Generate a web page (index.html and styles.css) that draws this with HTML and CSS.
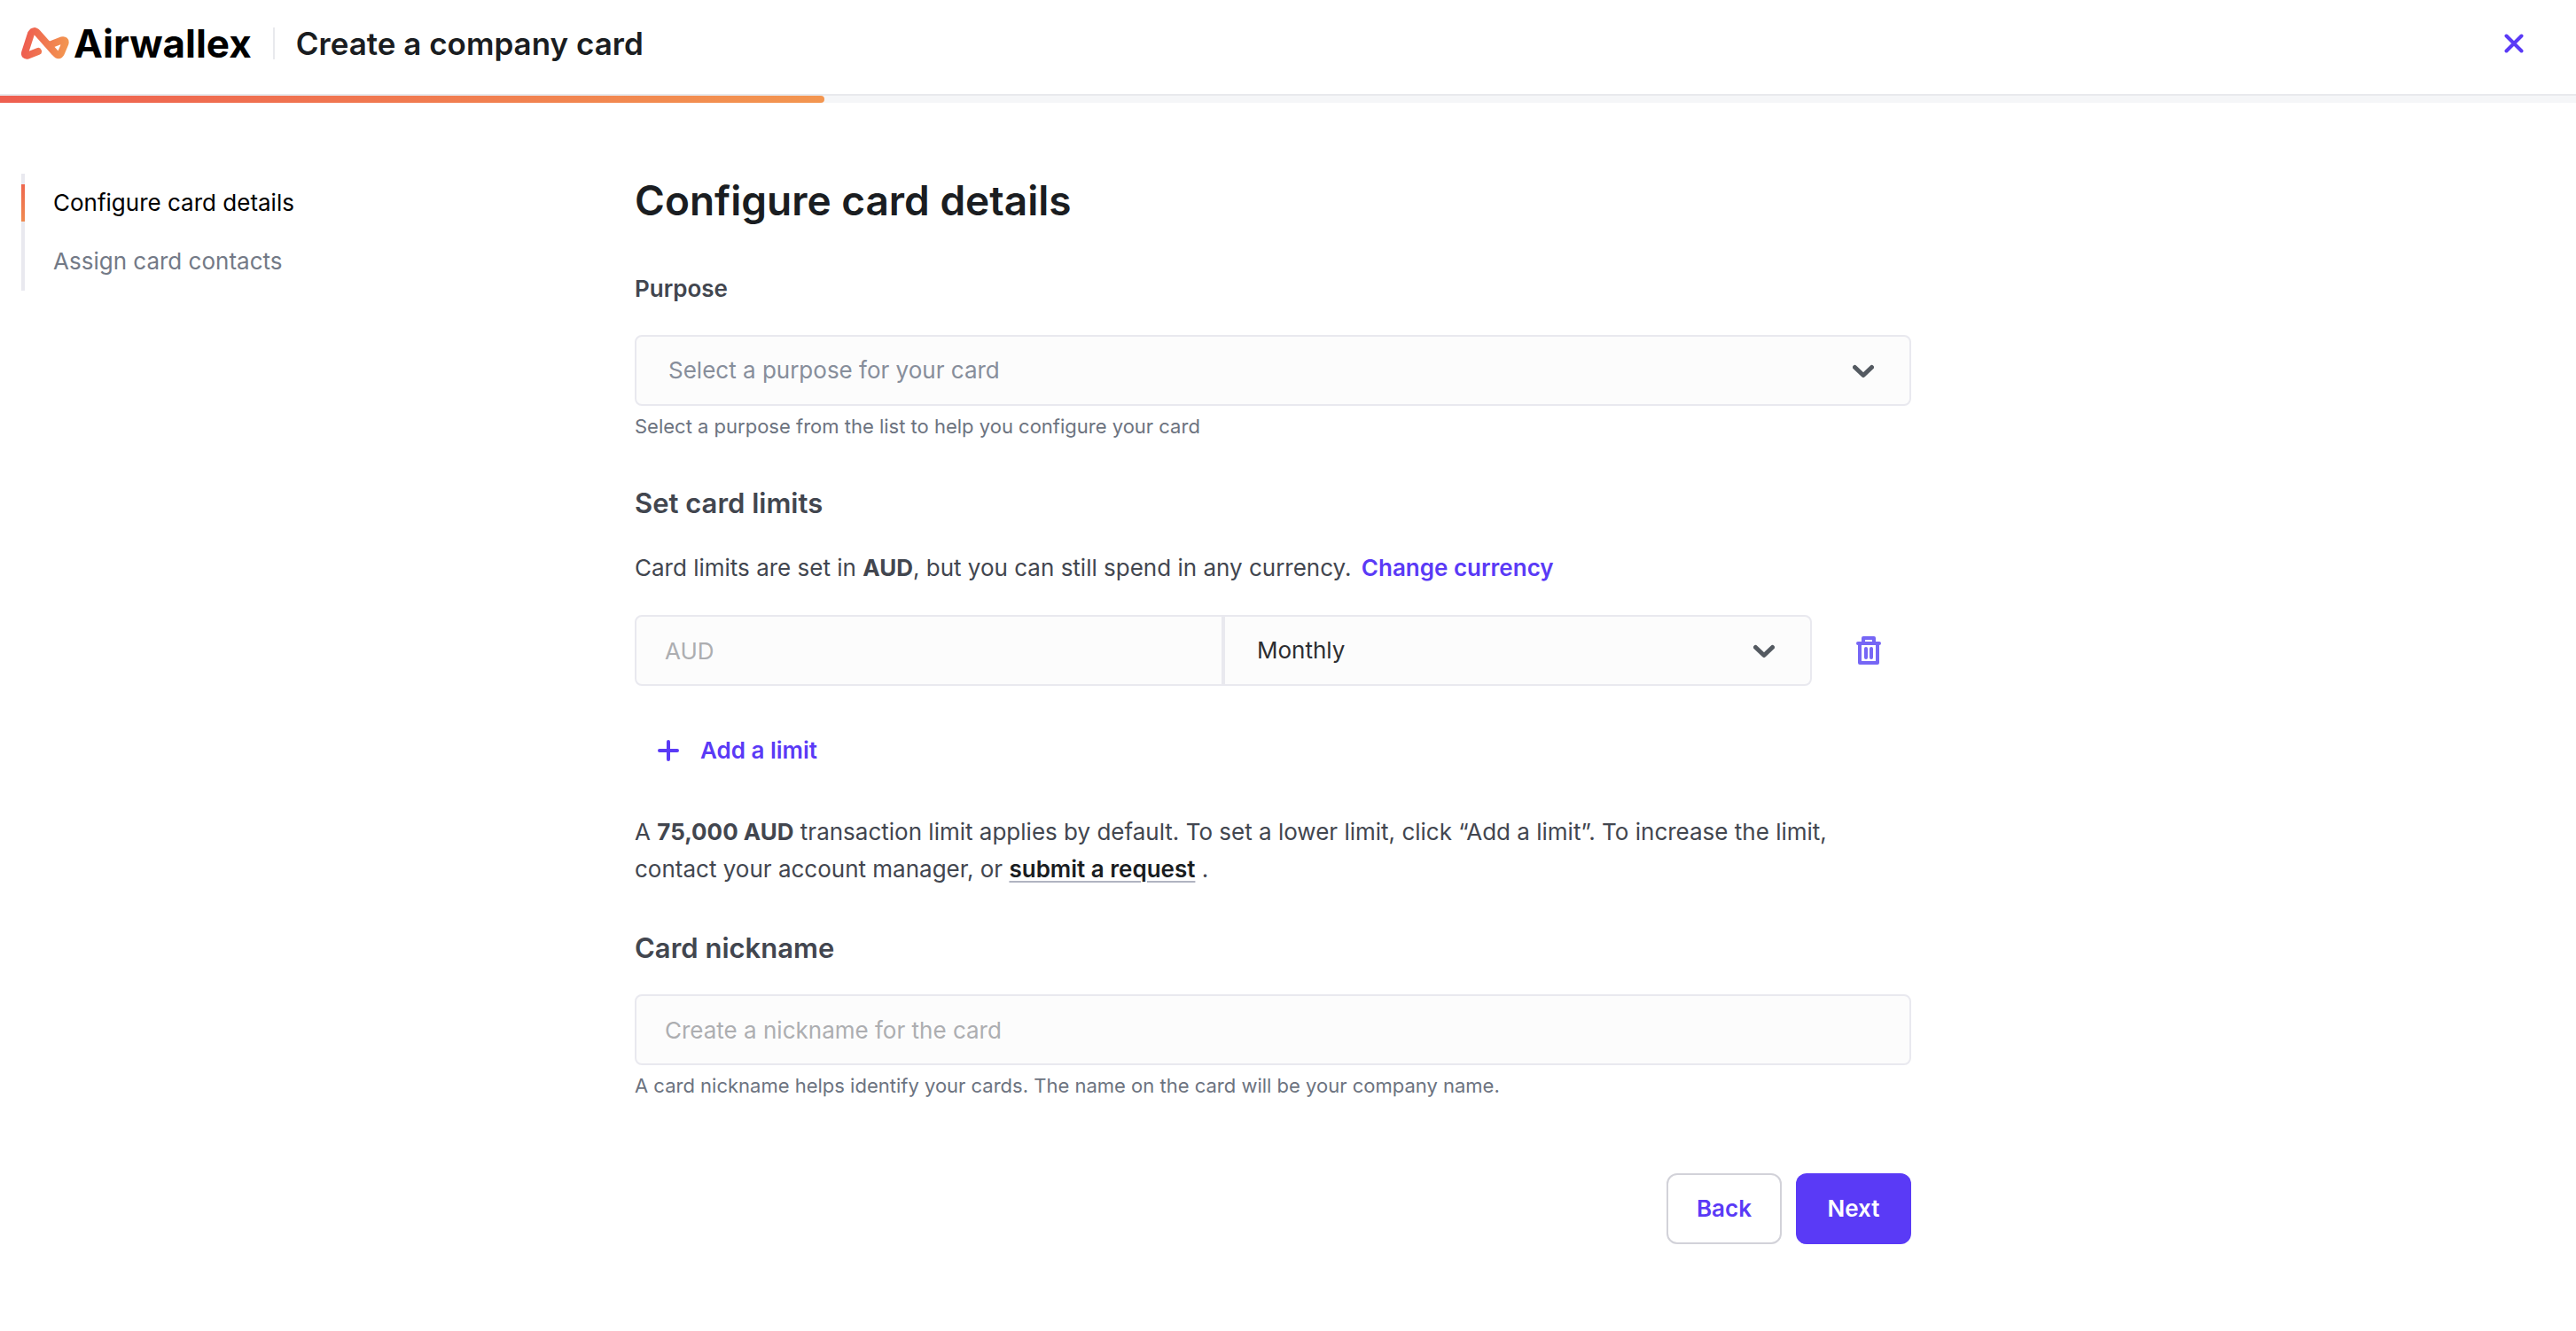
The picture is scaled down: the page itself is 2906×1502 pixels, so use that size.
FILE: index.html
```
<!DOCTYPE html>
<html lang="en">
<head>
    <meta charset="UTF-8">
    <meta name="viewport" content="width=device-width, initial-scale=1.0">
    <title>Create a company card - Airwallex</title>
    <link rel="stylesheet" href="styles.css">
</head>
<body>
    <header class="header">
        <a class="brand" href="#">
            <svg class="brand-mark" viewBox="0 0 54 36" aria-hidden="true">
                <defs>
                    <linearGradient id="brand-gradient" gradientUnits="userSpaceOnUse" x1="4" y1="16" x2="52" y2="24">
                        <stop offset="0" stop-color="#ee5f50"/>
                        <stop offset="1" stop-color="#f39650"/>
                    </linearGradient>
                </defs>
                <path d="M19 27L7.500 31.500Q3 32.500 4.200 28L11 7Q14 1.500 18.500 6.500L38 28.500Q42.500 34 45 28.500L49.500 18Q50.500 13.500 45.500 14.500L34 19" fill="none" stroke="url(#brand-gradient)" stroke-width="8" stroke-linecap="round" stroke-linejoin="round"/>
            </svg>
            <span class="brand-name">Airwallex</span>
        </a>
        <div class="header-title">Create a company card</div>
        <button class="close-btn" type="button" aria-label="Close">
            <svg viewBox="0 0 22 22" aria-hidden="true"><path d="M2.500 2.500l17 17M19.500 2.500l-17 17"/></svg>
        </button>
    </header>
    <div class="progress">
        <div class="progress-bar" style="width: 32%"></div>
    </div>

    <div class="layout">
        <nav class="steps">
            <a class="step active" href="#configure">Configure card details</a>
            <a class="step" href="#assign">Assign card contacts</a>
        </nav>

        <main class="content" id="configure">
            <h1>Configure card details</h1>

            <form>
                <label class="field-label" for="purpose">Purpose</label>
                <div class="select-wrap">
                    <select class="field select placeholder" id="purpose">
                        <option>Select a purpose for your card</option>
                    </select>
                    <svg class="chevron" viewBox="0 0 24 16" aria-hidden="true"><path d="M2.500 3.500l9.500 9 9.500-9"/></svg>
                </div>
                <p class="help">Select a purpose from the list to help you configure your card</p>

                <h2>Set card limits</h2>
                <p class="text">Card limits are set in <b>AUD</b>, but you can still spend in any currency. <a class="link" href="#currency">Change currency</a></p>

                <div class="limit-row">
                    <input class="field limit-amount" type="text" placeholder="AUD" aria-label="Limit amount">
                    <div class="select-wrap">
                        <select class="field select limit-period" aria-label="Limit period">
                            <option>Monthly</option>
                        </select>
                        <svg class="chevron" viewBox="0 0 24 16" aria-hidden="true"><path d="M2.500 3.500l9.500 9 9.500-9"/></svg>
                    </div>
                    <button class="delete-btn" type="button" aria-label="Remove limit">
                        <svg viewBox="0 0 28 32" aria-hidden="true"><path d="M2 8h24M8 7V2h12v5M4 9v21h20V9M11 14v10M17 14v10"/></svg>
                    </button>
                </div>

                <button class="add-btn" type="button">
                    <svg viewBox="0 0 24 24" aria-hidden="true"><path d="M12 2v20M2 12h20"/></svg>
                    Add a limit
                </button>

                <p class="text">A <b>75,000 AUD</b> transaction limit applies by default. To set a lower limit, click “Add a limit”. To increase the limit, contact your account manager, or <a class="request-link" href="#request">submit a request</a> .</p>

                <h2 class="nickname-title"><label for="nickname">Card nickname</label></h2>
                <input class="field" id="nickname" type="text" placeholder="Create a nickname for the card">
                <p class="help">A card nickname helps identify your cards. The name on the card will be your company name.</p>

                <div class="actions">
                    <button class="btn btn-secondary" type="button">Back</button>
                    <button class="btn btn-primary" type="submit">Next</button>
                </div>
            </form>
        </main>
    </div>
</body>
</html>
```
FILE: styles.css
```
* { box-sizing: border-box; }
body { margin: 0; background: #fff; color: #42464f; font-family: Inter, "Liberation Sans", sans-serif; font-size: 26px; line-height: 42px; }
h1, h2, p { margin: 0; }
button { padding: 0; border: none; background: none; font: inherit; cursor: pointer; }
svg { display: block; fill: none; stroke: currentColor; }

/* Header */
.header { display: flex; align-items: center; height: 108px; padding: 0 50px 8px 24px; border-bottom: 2px solid #e8e9ed; }
.brand { display: flex; align-items: center; gap: 5px; color: #000; text-decoration: none; }
.brand-mark { width: 54px; height: 36px; }
.brand-name { font-size: 44px; font-weight: 700; }
.header-title { margin-left: 24px; padding-left: 24px; border-left: 2px solid #e8e9ed; color: #1a1d21; font-size: 35px; font-weight: 600; line-height: 36px; }
.close-btn { width: 40px; height: 40px; margin-left: auto; color: #5a3af6; }
.close-btn svg { width: 22px; height: 22px; margin: auto; stroke-width: 4; stroke-linecap: round; }

.progress { height: 8px; background: #f5f6f8; }
.progress-bar { height: 8px; border-radius: 0 4px 4px 0; background: linear-gradient(90deg, #ee5f50, #f39650); }

/* Layout */
.layout { display: grid; grid-template-columns: 692px minmax(0, 1440px); padding: 80px 24px; }
.steps { align-self: start; border-left: 4px solid #e9e9ef; }
.step { display: block; position: relative; padding-left: 32px; color: #737a87; line-height: 66px; text-decoration: none; }
.step.active { color: #000; }
.step.active::before { content: ""; position: absolute; top: 12px; left: -4px; width: 4px; height: 42px; background: linear-gradient(#ee674e, #f08a50); }

h1 { margin-bottom: 50px; color: #1a1d21; font-size: 46px; font-weight: 600; line-height: 60px; }
h2 { margin: 52px 0 32px; font-size: 31px; font-weight: 600; line-height: 40px; }
.nickname-title { margin-top: 48px; }

/* Fields */
.field-label { display: block; margin-bottom: 32px; font-weight: 600; line-height: 40px; }
.field { display: block; width: 100%; height: 80px; padding: 0 32px; border: 2px solid #e9e9ef; border-radius: 8px; background: #fcfcfc; color: #2c2e31; font: inherit; }
.field::placeholder { color: #adaeb1; opacity: 1; }
.select-wrap { position: relative; }
.select { padding: 0 36px; appearance: none; }
.select.placeholder { color: #878e9b; }
.chevron { position: absolute; top: 33px; right: 42px; width: 24px; height: 16px; color: #545a61; stroke-width: 5; stroke-linecap: round; stroke-linejoin: round; pointer-events: none; }
.help { margin-top: 8px; color: #6c7380; font-size: 22px; line-height: 30px; }
.text b { font-weight: 700; }
.link { margin-left: 4px; color: #5a3af6; font-weight: 600; text-decoration: none; }
.request-link { color: #1a1d21; font-weight: 600; text-decoration: underline; text-decoration-color: #b0b4c1; text-decoration-thickness: 2px; text-underline-offset: 4px; }

.limit-row { display: grid; grid-template-columns: 1fr 1fr auto; margin-top: 32px; }
.limit-amount { border-radius: 8px 0 0 8px; }
.limit-period { border-radius: 0 8px 8px 0; }
.delete-btn { width: 80px; height: 80px; margin: 0 8px 0 24px; color: #7666f5; }
.delete-btn svg { width: 28px; height: 32px; margin: auto; stroke-width: 4; stroke-linecap: round; stroke-linejoin: round; }
.add-btn { display: flex; align-items: center; gap: 24px; margin: 52px 0 50px 26px; color: #5a3af6; font-weight: 600; }
.add-btn svg { width: 24px; height: 24px; stroke-width: 4; stroke-linecap: round; }

/* Actions */
.actions { display: flex; justify-content: flex-end; gap: 16px; margin-top: 84px; }
.btn { min-width: 130px; height: 80px; padding: 0 32px; border-radius: 12px; font-weight: 600; }
.btn-secondary { border: 2px solid #d2d2d9; color: #5a3af6; }
.btn-primary { background: #5a3af6; color: #fff; }
```
